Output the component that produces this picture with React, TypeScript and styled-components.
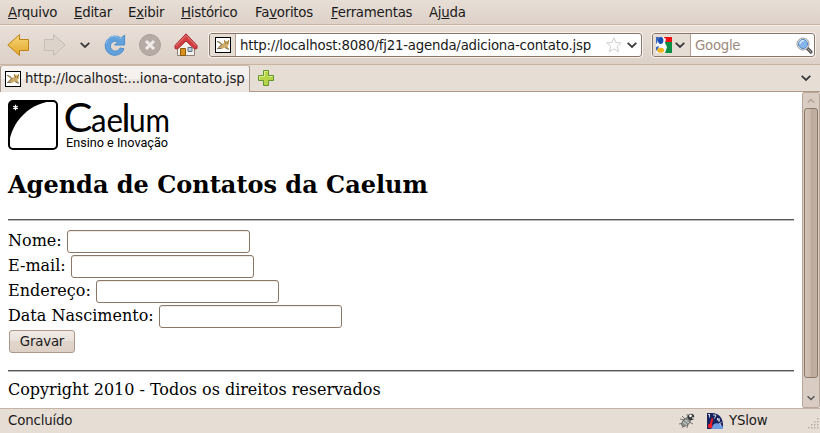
import React from 'react';
import styled, { createGlobalStyle } from 'styled-components';

const Global = createGlobalStyle`
  * { box-sizing: border-box; }
  body { margin: 0; overflow: hidden; background: #fff; }
  svg { display: block; flex: none; overflow: visible; }
`;

const Window = styled.div`
  width: 820px;
  height: 433px;
  display: flex;
  flex-direction: column;
  background: #e6ddd5;
  color: #1a1a1a;
  font: 13.33px/16px "DejaVu Sans", sans-serif;
  white-space: nowrap;
`;

const Label = styled.span<{ $ls?: number }>`
  letter-spacing: ${(p) => p.$ls ?? 0}px;
`;

const MenuBar = styled.nav`
  height: 25px;
  flex: none;
  display: grid;
  grid-template-columns: 66px 54px 53px 74px 76px 98px 60px;
  padding: 5px 0 0 8px;
  background: linear-gradient(#e7ded6, #ddd1c8);
  border-bottom: 1px solid #c9b3a3;
`;

const Key = styled.span`
  text-decoration: underline;
  text-decoration-thickness: 1px;
  text-underline-offset: 1px;
`;

const Toolbar = styled.div`
  height: 40px;
  flex: none;
  display: flex;
  align-items: center;
  padding: 0 3px 0 7px;
  background: linear-gradient(#e8dfd8, #ddd1c8);
  border-top: 1px solid #f3eeea;
  border-bottom: 1px solid #c9b3a3;
`;

const Slot = styled.div<{ $w: number }>`
  width: ${(p) => p.$w}px;
  flex: none;
`;

const Field = styled.div<{ $w: number; $gap?: number }>`
  width: ${(p) => p.$w}px;
  height: 24px;
  flex: none;
  display: flex;
  align-items: center;
  margin-left: ${(p) => p.$gap ?? 0}px;
  background: #fff;
  border: 1px solid #8b7567;
  border-radius: 3px;
  box-shadow: 0 0 0 1px #f6f1ed;
`;

const FieldHead = styled.div<{ $w: number; $pad: number }>`
  width: ${(p) => p.$w}px;
  height: 22px;
  flex: none;
  display: flex;
  align-items: center;
  gap: 3px;
  padding-left: ${(p) => p.$pad}px;
  background: #e6ddd5;
  border-right: 1px solid #b3a093;
  border-radius: 2px 0 0 2px;
`;

const FieldText = styled.span<{ $ls?: number; $muted?: boolean }>`
  flex: 1;
  padding: 1px 0 0 4px;
  letter-spacing: ${(p) => p.$ls ?? 0}px;
  color: ${(p) => (p.$muted ? '#9d8b7c' : '#1a1a1a')};
`;

const TabBar = styled.div`
  height: 27px;
  flex: none;
  display: flex;
  align-items: center;
  border-bottom: 1px solid #ae9a8b;
`;

const Tab = styled.div`
  width: 250px;
  height: 27px;
  flex: none;
  display: flex;
  align-items: center;
  gap: 4px;
  padding: 1px 0 0 4px;
  background: linear-gradient(#f5f1ee 0 50%, #ede5df 50% 100%);
  border: 1px solid #ae9a8b;
  border-top-color: #cbb9ab;
  border-bottom: 0;
  border-radius: 3px 3px 0 0;
`;

const Spacer = styled.div`
  flex: 1;
`;

const Viewport = styled.div`
  height: 316px;
  flex: none;
  display: flex;
  background: #fff;
`;

const Page = styled.main`
  width: 802px;
  padding: 8px;
  color: #000;
  font: 16px/19px "DejaVu Serif", serif;
`;

const Title = styled.h1`
  margin: 18px 0 0;
  height: 29px;
  font: bold 24px/29px "DejaVu Serif", serif;
`;

const Rule = styled.hr<{ $mt: number; $mb: number }>`
  margin: ${(p) => p.$mt}px 0 ${(p) => p.$mb}px;
  height: 2px;
  border: 0;
  border-top: 1px solid #555;
  border-bottom: 1px solid #bbb;
  width: 786px;
`;

const Row = styled.label`
  height: 25px;
  display: flex;
  align-items: center;
  gap: 5px;
`;

const Input = styled.input`
  width: 183px;
  height: 23px;
  margin: 2px 0 0;
  padding: 0 4px;
  background: #fff;
  border: 1px solid #8b7767;
  border-radius: 3px;
  box-shadow: inset 0 1px #f1ebe6;
  outline: none;
`;

const Save = styled.button`
  display: block;
  width: 66px;
  height: 23px;
  margin: 2px 0 0 1px;
  padding: 0;
  color: #1a1a1a;
  font: 13.33px/20px "DejaVu Sans", sans-serif;
  background: linear-gradient(#f1ebe7, #e8dfd8 50%, #e0d5cc 50%, #ddd0c6);
  border: 1px solid #ab988a;
  border-radius: 3px;
`;

const ScrollTrack = styled.div`
  width: 18px;
  display: flex;
  flex-direction: column;
  align-items: center;
  background: #d9cdc3;
  border: 1px solid #b9a698;
  border-radius: 2px;
`;

const ScrollThumb = styled.div`
  width: 14px;
  height: 270px;
  flex: none;
  border: 1px solid #8b7767;
  border-radius: 3px;
  background: linear-gradient(90deg, #d2c3b7, #c8b8ab 50%, #bba899 50%, #c3b2a5);
`;

const ScrollButton = styled.div<{ $h: number }>`
  height: ${(p) => p.$h}px;
  flex: none;
  display: flex;
  align-items: center;
`;

const StatusBar = styled.footer`
  height: 25px;
  flex: none;
  display: flex;
  align-items: center;
  padding-left: 8px;
  border-top: 1px solid #c4b3a5;
`;

const Chevron = ({ size = 10, color = '#3a3a3a', up = false }: { size?: number; color?: string; up?: boolean }) => (
  <svg width={size} height={size} viewBox="0 0 10 10">
    <path d={up ? 'M1 7L5 3l4 4' : 'M.7 2.8L5 7l4.3-4.2'} fill="none" stroke={color} strokeWidth="1.8" />
  </svg>
);

const Favicon = () => (
  <svg width="16" height="16" viewBox="0 0 16 16">
    <rect x=".5" y=".5" width="15" height="15" fill="#fff" stroke="#000" />
    <path d="M2 4.5l3 .5 2 2 2-1V3l1.5 1h2L14 3v4l-1.5 2 1.5 3h-3L9.5 10.5 7 12H2l1.5-2L6 8z" fill="#cfab68" />
    <path d="M2 4.5l2.5.5L7 7.5l-3.5 3M6 11.5H2.2M10.5 10.5l2 1.5H14" fill="none" stroke="#77715f" />
    <path d="M9.5 3.5v1M13.5 3.5v1" stroke="#8a5f1e" />
    <path d="M10 6h1M12 6h1" stroke="#6c501f" />
  </svg>
);

const Arrow = ({ forward = false }: { forward?: boolean }) => (
  <svg width="23" height="24" viewBox="0 0 23 24">
    <defs>
      <linearGradient id="gold" x2="0" y2="1">
        <stop stopColor="#f6d678" />
        <stop offset="1" stopColor="#e4a62b" />
      </linearGradient>
    </defs>
    <path
      transform={forward ? 'translate(23 0) scale(-1 1)' : undefined}
      d="M.8 12L12.5 1.5V6.5h9v11h-9v5z"
      fill={forward ? '#dcd3cb' : 'url(#gold)'}
      stroke={forward ? '#c6bdb6' : '#bd8415'}
      strokeLinejoin="round"
    />
  </svg>
);

const Reload = () => (
  <svg width="22" height="22" viewBox="0 0 22 22">
    <path d="M17 4.2L20.6 1v10h-10l3.2-3.2A5 5 0 1 0 16 14l4 .8A9.7 9.7 0 1 1 17 4.2z" fill="#62a1dc" stroke="#4f8fcc" />
    <path d="M2 10c1-7 8-10 13.5-5.5L18.5 4" fill="none" stroke="#91c2ed" />
  </svg>
);

const Stop = () => (
  <svg width="22" height="22" viewBox="0 0 22 22">
    <circle cx="11" cy="11" r="10.5" fill="#b7aca5" stroke="#aca19a" />
    <path d="M7 7l8 8M15 7l-8 8" stroke="#f1ece8" strokeWidth="3" />
  </svg>
);

const Home = () => (
  <svg width="24" height="24" viewBox="0 0 24 24">
    <path d="M3.5 12L12 5l8.5 7v10.5h-17z" fill="#f4f1ec" stroke="#8b8279" />
    <path d="M12 .8L1 12.5v3L3.5 16 12 8l8.5 8 2.5-.5v-3z" fill="#d33e43" stroke="#a52b2f" strokeLinejoin="round" />
    <path d="M2 12.8L12 2.4l10 10.4" fill="none" stroke="#e98384" />
    <path d="M6.5 15.5h5v7h-5z" fill="#d9921e" stroke="#8f5a0c" />
    <path d="M14 14.5h4v4h-4z" fill="#b9d0e2" stroke="#62727f" />
  </svg>
);

const Star = () => (
  <svg width="16" height="16" viewBox="0 0 16 16">
    <path d="M8 .8l2 4.8 5.3.3-4.1 3.4 1.4 5.5L8 11.9l-4.6 2.9 1.4-5.5L.7 5.9 6 5.6z" fill="#fff" stroke="#cfcfcf" strokeLinejoin="round" />
  </svg>
);

const Engine = () => (
  <svg width="16" height="16" viewBox="0 0 16 16">
    <path d="M0 0h10v16H0z" fill="#f4f7fb" />
    <path d="M8 0h8v6H8z" fill="#ee1111" />
    <path d="M9 5h7v11H8z" fill="#0b8f47" />
    <path d="M0 0h3L1 6l-1 1zM0 10l3-1-1 3-2 2z" fill="#3a67bd" />
    <path d="M7 0l3 2-1 4 2 4-2 6H6l1-4-3-4 3-3z" fill="#fff" />
    <ellipse cx="4.7" cy="3.5" rx="2.7" ry="3.4" fill="#1450b4" />
    <ellipse cx="4.7" cy="13.3" rx="3.5" ry="2.5" fill="#efb31c" />
  </svg>
);

const Magnifier = () => (
  <svg width="17" height="17" viewBox="0 0 17 17">
    <path d="M10.5 10.5l4.5 4.5" stroke="#555" strokeWidth="3.2" strokeLinecap="round" />
    <path d="M12 12l3 3" stroke="#aaa" strokeLinecap="round" />
    <circle cx="7" cy="7" r="6" fill="#fff" stroke="#999" />
    <circle cx="7" cy="7" r="4.6" fill="#84b5ea" stroke="#5b87bd" />
    <path d="M4 7a3 3 0 0 1 4-3" stroke="#d8eaff" strokeWidth="1.5" fill="none" />
  </svg>
);

const Plus = () => (
  <svg width="16" height="16" viewBox="0 0 16 16">
    <path d="M5.5.5h5v5h5v5h-5v5h-5v-5h-5v-5h5z" fill="#b5d447" stroke="#64962c" />
    <path d="M6.5 6.5v-5h3M1.5 9.5v-3h5M10.5 6.5h4" fill="none" stroke="#dced92" />
  </svg>
);

const Logo = () => (
  <svg width="164" height="52" viewBox="0 0 164 52">
    <rect x="1" y="1" width="48" height="48" rx="4" fill="#fff" stroke="#000" strokeWidth="2" />
    <path d="M1 45V5a4 4 0 0 1 4-4h41C23 2 3 21 1 45z" />
    <path d="M7.5 4.7v5.6M5.2 6.2l4.6 2.6M9.8 6.2L5.2 8.8" stroke="#fff" strokeWidth="1.3" />
    <g fontFamily="Lato, sans-serif">
      <text x="55.5" y="32.3" fontSize="41" textLength="29" lengthAdjust="spacingAndGlyphs">C</text>
      <text x="83" y="32.3" fontSize="33" textLength="32" lengthAdjust="spacingAndGlyphs">ae</text>
      <text x="113.5" y="32.3" fontSize="39" textLength="9" lengthAdjust="spacingAndGlyphs">l</text>
      <text x="121" y="32.3" fontSize="33" textLength="41" lengthAdjust="spacingAndGlyphs">um</text>
    </g>
    <text x="58" y="47" fontFamily="Roboto, sans-serif" fontSize="13" textLength="102" lengthAdjust="spacingAndGlyphs">
      Ensino e Inovação
    </text>
  </svg>
);

const Bug = () => (
  <svg width="16" height="16" viewBox="0 0 16 16">
    <path d="M1 6l5 1M3 3l4 4M8 1l1 5M0 11l5-1M3 15l3-4M8 15l1-4M14 11l-4-2" stroke="#777" />
    <ellipse cx="7" cy="8.8" rx="3" ry="5.5" transform="rotate(45 7 9)" fill="#8e928d" stroke="#5c605c" />
    <path d="M4 9l4 3M6 7l4 3" stroke="#d9ddd8" />
    <circle cx="12" cy="4" r="3.2" fill="#393939" />
    <circle cx="11.5" cy="2.8" r="1.4" fill="#fff" />
    <circle cx="14" cy="5" r="1" fill="#ddd" />
  </svg>
);

const Gauge = () => (
  <svg width="16" height="16" viewBox="0 0 16 16">
    <path d="M0 0h5c7 0 11 5 11 12v4H0z" fill="#17245f" />
    <path d="M6 12c3-3 7-2 10 2v2H4z" fill="#6e9ce0" />
    <path d="M1 1.5h2M2.5 1.5v3M6 2h3L7.5 5.5M10.5 5v2h2.5M12 5v4M14.5 9.5l-2 1 1.5 2" stroke="#fff" strokeWidth="0.8" fill="none" />
    <path d="M3.3 13L5.5 5.5" stroke="#ef1c25" strokeWidth="2" />
    <circle cx="3.2" cy="13" r="2.3" fill="#ef1c25" />
  </svg>
);

const gripDots = [[10, 0], [7, 3], [10, 3], [4, 6], [7, 6], [10, 6], [1, 9], [4, 9], [7, 9], [10, 9]];

const Grip = () => (
  <svg width="13" height="6" viewBox="0 0 13 6">
    {gripDots.map(([x, y]) => (
      <rect key={`${x}-${y}`} x={x} y={y} width="1.5" height="1.5" fill="#bcaea3" />
    ))}
  </svg>
);

const menus: [string, string, string][] = [
  ['', 'A', 'rquivo'],
  ['', 'E', 'ditar'],
  ['E', 'x', 'ibir'],
  ['', 'H', 'istórico'],
  ['Fa', 'v', 'oritos'],
  ['', 'F', 'erramentas'],
  ['Aj', 'u', 'da'],
];

const fields = ['Nome:', 'E-mail:', 'Endereço:', 'Data Nascimento:'];

export default function App() {
  return (
    <Window>
      <Global />
      <MenuBar>
        {menus.map(([before, key, after]) => (
          <Label key={before + key + after} $ls={-0.25}>
            {before}<Key>{key}</Key>{after}
          </Label>
        ))}
      </MenuBar>
      <Toolbar>
        <Slot $w={36}><Arrow /></Slot>
        <Slot $w={37}><Arrow forward /></Slot>
        <Slot $w={24}><Chevron /></Slot>
        <Slot $w={35}><Reload /></Slot>
        <Slot $w={35}><Stop /></Slot>
        <Slot $w={35}><Home /></Slot>
        <Field $w={433}>
          <FieldHead $w={26} $pad={5}><Favicon /></FieldHead>
          <FieldText $ls={-0.22}>http://localhost:8080/fj21-agenda/adiciona-contato.jsp</FieldText>
          <Slot $w={21}><Star /></Slot>
          <Slot $w={14}><Chevron /></Slot>
        </Field>
        <Field $w={163} $gap={10}>
          <FieldHead $w={38} $pad={3}>
            <Engine />
            <Chevron />
          </FieldHead>
          <FieldText $ls={-0.3} $muted>Google</FieldText>
          <Slot $w={18}><Magnifier /></Slot>
        </Field>
      </Toolbar>
      <TabBar>
        <Tab>
          <Favicon />
          <Label $ls={-0.15}>http://localhost:...iona-contato.jsp</Label>
        </Tab>
        <Slot $w={8} />
        <Plus />
        <Spacer />
        <Slot $w={19}><Chevron /></Slot>
      </TabBar>
      <Viewport>
        <Page>
          <Logo />
          <Title>Agenda de Contatos da Caelum</Title>
          <Rule $mt={20} $mb={7} />
          {fields.map((name) => (
            <Row key={name}>{name}<Input /></Row>
          ))}
          <Save><Label $ls={-0.2}>Gravar</Label></Save>
          <Rule $mt={17} $mb={8} />
          <Label $ls={-0.02}>Copyright 2010 - Todos os direitos reservados</Label>
        </Page>
        <ScrollTrack>
          <ScrollButton $h={15}><Chevron size={8} color="#b3a295" up /></ScrollButton>
          <ScrollThumb />
          <Spacer />
          <ScrollButton $h={18}><Chevron size={8} color="#555" /></ScrollButton>
        </ScrollTrack>
      </Viewport>
      <StatusBar>
        <Label $ls={-0.15}>Concluído</Label>
        <Spacer />
        <Slot $w={28}><Bug /></Slot>
        <Slot $w={22}><Gauge /></Slot>
        <Slot $w={78}><Label $ls={-0.15}>YSlow</Label></Slot>
        <Grip />
      </StatusBar>
    </Window>
  );
}
